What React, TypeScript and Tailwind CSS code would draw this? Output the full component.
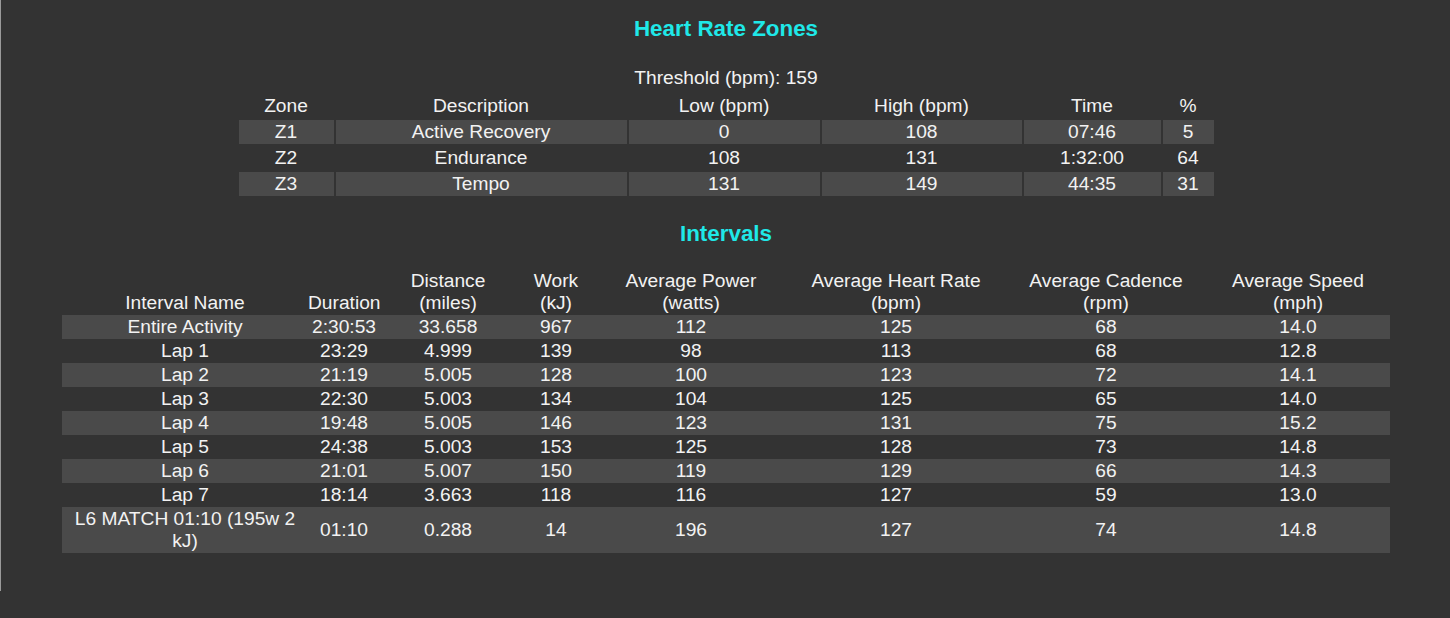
const zones = [
  { zone: "Z1", desc: "Active Recovery", low: "0", high: "108", time: "07:46", pct: "5" },
  { zone: "Z2", desc: "Endurance", low: "108", high: "131", time: "1:32:00", pct: "64" },
  { zone: "Z3", desc: "Tempo", low: "131", high: "149", time: "44:35", pct: "31" },
];

const intervals = [
  ["Entire Activity", "2:30:53", "33.658", "967", "112", "125", "68", "14.0"],
  ["Lap 1", "23:29", "4.999", "139", "98", "113", "68", "12.8"],
  ["Lap 2", "21:19", "5.005", "128", "100", "123", "72", "14.1"],
  ["Lap 3", "22:30", "5.003", "134", "104", "125", "65", "14.0"],
  ["Lap 4", "19:48", "5.005", "146", "123", "131", "75", "15.2"],
  ["Lap 5", "24:38", "5.003", "153", "125", "128", "73", "14.8"],
  ["Lap 6", "21:01", "5.007", "150", "119", "129", "66", "14.3"],
  ["Lap 7", "18:14", "3.663", "118", "116", "127", "59", "13.0"],
  ["L6 MATCH 01:10 (195w 2 kJ)", "01:10", "0.288", "14", "196", "127", "74", "14.8"],
];

export default function App() {
  return (
    <div className="h-[618px] w-full overflow-hidden bg-[#333333] font-['Liberation_Sans',Arial,sans-serif] text-[19.2px] leading-[22px] text-[#f2f2f2]">
      <div className="h-[591px] border-l border-[#9a9a9a] pl-px">
        {/* Heart rate zones */}
        <h3 className="pt-4 text-center text-[22.4px] font-bold leading-[26px] text-[#1fe8e8]">Heart Rate Zones</h3>
        <div className="mt-[25px] text-center">Threshold (bpm): 159</div>
        <table className="mx-auto mt-[3px] table-fixed border-separate border-spacing-[2px] text-center">
          <thead>
            <tr>
              <th className="w-[95px] py-px font-normal">Zone</th>
              <th className="w-[291px] py-px font-normal">Description</th>
              <th className="w-[191px] py-px font-normal">Low (bpm)</th>
              <th className="w-[200px] py-px font-normal">High (bpm)</th>
              <th className="w-[137px] py-px font-normal">Time</th>
              <th className="w-[51px] py-px font-normal">%</th>
            </tr>
          </thead>
          <tbody>
            {zones.map((z, i) => {
              const cell = i % 2 === 0 ? "py-px bg-[#4a4a4a]" : "py-px";
              return (
                <tr key={z.zone}>
                  <td className={cell}>{z.zone}</td>
                  <td className={cell}>{z.desc}</td>
                  <td className={cell}>{z.low}</td>
                  <td className={cell}>{z.high}</td>
                  <td className={cell}>{z.time}</td>
                  <td className={cell}>{z.pct}</td>
                </tr>
              );
            })}
          </tbody>
        </table>

        {/* Intervals */}
        <h3 className="mt-[23px] text-center text-[22.4px] font-bold leading-[26px] text-[#1fe8e8]">Intervals</h3>
        <table className="mx-auto mt-[22px] w-[1328px] table-fixed border-collapse text-center">
          <thead>
            <tr className="align-bottom">
              <th className="w-[246px] py-px font-normal">Interval Name</th>
              <th className="w-[72px] py-px font-normal">Duration</th>
              <th className="w-[136px] py-px font-normal">Distance<br />(miles)</th>
              <th className="w-[80px] py-px font-normal">Work<br />(kJ)</th>
              <th className="w-[190px] py-px font-normal">Average Power<br />(watts)</th>
              <th className="w-[220px] py-px font-normal">Average Heart Rate<br />(bpm)</th>
              <th className="w-[200px] py-px font-normal">Average Cadence<br />(rpm)</th>
              <th className="w-[184px] py-px font-normal">Average Speed<br />(mph)</th>
            </tr>
          </thead>
          <tbody>
            {intervals.map((row, i) => (
              <tr key={row[0]} className={i % 2 === 0 ? "bg-[#4a4a4a]" : ""}>
                {row.map((v, j) => (
                  <td key={j} className="py-px align-middle">{v}</td>
                ))}
              </tr>
            ))}
          </tbody>
        </table>
      </div>
    </div>
  );
}
